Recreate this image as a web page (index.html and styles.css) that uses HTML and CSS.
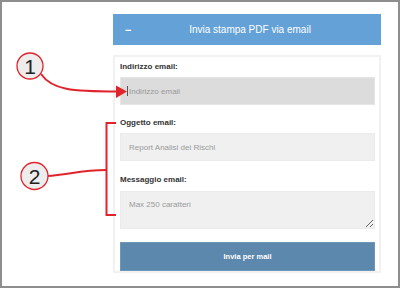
FILE: index.html
```html
<!DOCTYPE html>
<html lang="it">
<head>
    <meta charset="UTF-8">
    <title>Invia stampa PDF via email</title>
    <link rel="stylesheet" href="styles.css">
</head>
<body>

<div class="frame">
    <div class="column">
        <div class="panel-header">
            <span class="toggle">&minus;</span>
            <span class="panel-title">Invia stampa PDF via email</span>
        </div>

        <div class="panel">
            <label class="field-label">Indirizzo email:</label>
            <div class="field-wrap">
                <input class="field field-focus" type="email" placeholder="Indirizzo email">
                <span class="caret"></span>
            </div>

            <label class="field-label">Oggetto email:</label>
            <input class="field field-subject" type="text" placeholder="Report Analisi dei Rischi">

            <label class="field-label label-message">Messaggio email:</label>
            <textarea class="field field-area" placeholder="Max 250 caratteri"></textarea>

            <button class="send-btn">Invia per mail</button>
        </div>
    </div>

    <!-- callouts -->
    <svg class="callouts" width="400" height="288" viewBox="0 0 400 288">
        <path d="M41 74 C52 90, 72 91.5, 118 91.5" fill="none" stroke="#e1232b" stroke-width="2"/>
        <polygon points="116,85.5 127,91.5 116,98" fill="#e1232b"/>
        <path d="M47 176 C68 175, 80 170, 106.5 170" fill="none" stroke="#e1232b" stroke-width="2"/>
        <path d="M116 123 H106.5 V215 H116" fill="none" stroke="#e1232b" stroke-width="2"/>
        <circle cx="30" cy="66" r="13" fill="#ededed" stroke="#e1232b" stroke-width="1.3"/>
        <circle cx="34.5" cy="176" r="13.5" fill="#ededed" stroke="#e1232b" stroke-width="1.3"/>
        <text x="30" y="73.5" class="callout-num" text-anchor="middle">1</text>
        <text x="34.5" y="183.5" class="callout-num" text-anchor="middle">2</text>
    </svg>
</div>

</body>
</html>
```

FILE: styles.css
```css
body {
    margin: 0;
    padding: 0;
    background: #ffffff;
    font-family: "Liberation Sans", Arial, sans-serif;
}
.frame {
    position: relative;
    width: 400px;
    height: 288px;
    box-sizing: border-box;
    border: 2px solid #8e8e8e;
    background: #ffffff;
    overflow: hidden;
}
.column {
    width: 268px;
    margin: 12px 0 0 111px;
    display: flex;
    flex-direction: column;
    gap: 10px;
}
.panel-header {
    height: 31px;
    background: #63a1d6;
    display: flex;
    align-items: center;
    color: #ffffff;
}
.toggle {
    width: 22px;
    padding-left: 12px;
    font-size: 11px;
    font-weight: bold;
}
.panel-title {
    flex: 1;
    text-align: center;
    font-size: 10px;
    padding-right: 28px;
}
.panel {
    border: 2px solid #f1f1f1;
    padding: 5px 4px 0 5px;
    display: flex;
    flex-direction: column;
}
.field-label {
    font-size: 8px;
    line-height: 10px;
    font-weight: bold;
    color: #333333;
    margin-bottom: 5px;
}
.label-message {
    margin-bottom: 6px;
}
.field-wrap {
    position: relative;
    display: flex;
}
.field {
    width: 255px;
    height: 28px;
    box-sizing: border-box;
    border: 1px solid #ebebeb;
    background: #f0f0f0;
    padding: 0 8px;
    font-family: "Liberation Sans", Arial, sans-serif;
    font-size: 8px;
    color: #555555;
    margin: 0 0 13px 0;
    outline: none;
}
.field::placeholder {
    color: #9a9a9a;
}
.field-focus {
    background: #dcdcdc;
    border-color: #e6e6e6;
}
.field-subject {
    margin-bottom: 14px;
}
.caret {
    position: absolute;
    left: 7px;
    top: 9px;
    width: 1px;
    height: 10px;
    background: #555555;
}
.field-area {
    height: 38px;
    padding-top: 8px;
    resize: vertical;
    display: block;
}
.send-btn {
    width: 255px;
    height: 29px;
    border: 1px solid #6f97ba;
    background: #5d88ad;
    color: #ffffff;
    font-family: "Liberation Sans", Arial, sans-serif;
    font-size: 7.5px;
    font-weight: bold;
}
.callouts {
    position: absolute;
    left: -2px;
    top: -2px;
}
.callout-num {
    font-family: "Liberation Sans", Arial, sans-serif;
    font-size: 21px;
    fill: #222222;
}
```
